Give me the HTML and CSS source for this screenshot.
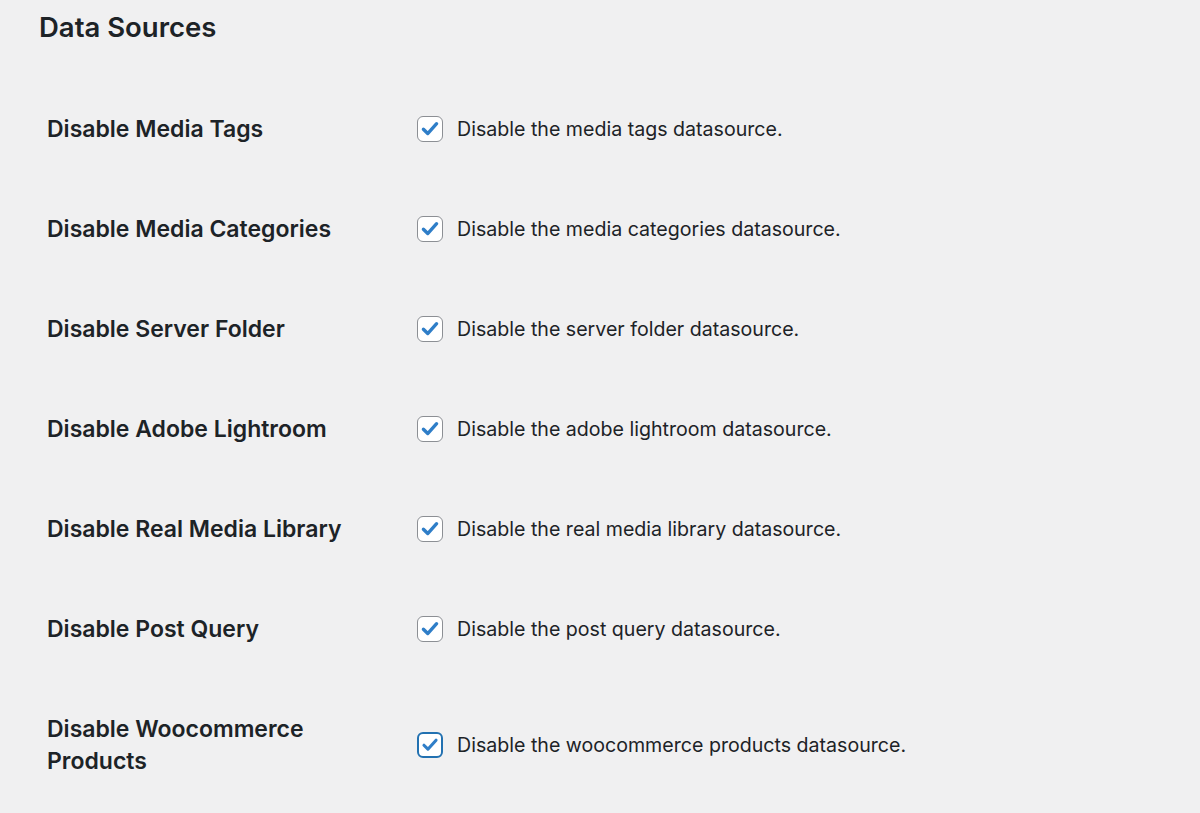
FILE: index.html
```html
<!DOCTYPE html>
<html>
<head>
  <title>Settings - Data Sources</title>
  <meta charset="UTF-8">
  <meta name="viewport" content="width=device-width, initial-scale=1.0">
  <link rel="stylesheet" href="styles.css">
</head>
<body>
  <h2>Data Sources</h2>

  <table class="form-table">
    <tr>
      <th>Disable Media Tags</th>
      <td><label><span class="box"><svg viewBox="0 0 20 20"><path d="M4.5 10.2l3.6 3.6 7.4-8.2"/></svg></span>Disable the media tags datasource.</label></td>
    </tr>
    <tr>
      <th>Disable Media Categories</th>
      <td><label><span class="box"><svg viewBox="0 0 20 20"><path d="M4.5 10.2l3.6 3.6 7.4-8.2"/></svg></span>Disable the media categories datasource.</label></td>
    </tr>
    <tr>
      <th>Disable Server Folder</th>
      <td><label><span class="box"><svg viewBox="0 0 20 20"><path d="M4.5 10.2l3.6 3.6 7.4-8.2"/></svg></span>Disable the server folder datasource.</label></td>
    </tr>
    <tr>
      <th>Disable Adobe Lightroom</th>
      <td><label><span class="box"><svg viewBox="0 0 20 20"><path d="M4.5 10.2l3.6 3.6 7.4-8.2"/></svg></span>Disable the adobe lightroom datasource.</label></td>
    </tr>
    <tr>
      <th>Disable Real Media Library</th>
      <td><label><span class="box"><svg viewBox="0 0 20 20"><path d="M4.5 10.2l3.6 3.6 7.4-8.2"/></svg></span>Disable the real media library datasource.</label></td>
    </tr>
    <tr>
      <th>Disable Post Query</th>
      <td><label><span class="box"><svg viewBox="0 0 20 20"><path d="M4.5 10.2l3.6 3.6 7.4-8.2"/></svg></span>Disable the post query datasource.</label></td>
    </tr>
    <tr>
      <th>Disable Woocommerce Products</th>
      <td><label><span class="box focus"><svg viewBox="0 0 20 20"><path d="M4.5 10.2l3.6 3.6 7.4-8.2"/></svg></span>Disable the woocommerce products datasource.</label></td>
    </tr>
  </table>
</body>
</html>
```

FILE: styles.css
```css
body {
  font-family: Inter, "Noto Sans", sans-serif;
  background-color: #f0f0f1;
  color: #1d2327;
  margin: 0;
  padding: 0 0 0 39px;
}

h2 {
  font-size: 27.5px;
  font-weight: 600;
  margin: 9px 0 0;
  line-height: 36px;
}

.form-table {
  border-collapse: collapse;
  margin-top: 34px;
}

.form-table th {
  width: 300px;
  text-align: left;
  vertical-align: middle;
  padding: 34px 70px 34px 8px;
  font-size: 23px;
  font-weight: 600;
  line-height: 32px;
}

.form-table td {
  padding: 34px 0;
  vertical-align: middle;
  font-size: 19.6px;
  line-height: 32px;
}

.form-table label {
  display: flex;
  align-items: center;
  gap: 14px;
}

.box {
  width: 26px;
  height: 26px;
  box-sizing: border-box;
  border: 1.5px solid #8c8f94;
  border-radius: 6px;
  background: #fff;
  display: flex;
  align-items: center;
  justify-content: center;
}

.box svg {
  width: 24px;
  height: 24px;
}

.box path {
  fill: none;
  stroke: #2f7ec8;
  stroke-width: 2.8;
  stroke-linecap: round;
  stroke-linejoin: round;
}

.box.focus {
  border: 2.5px solid #2271b1;
}
```
